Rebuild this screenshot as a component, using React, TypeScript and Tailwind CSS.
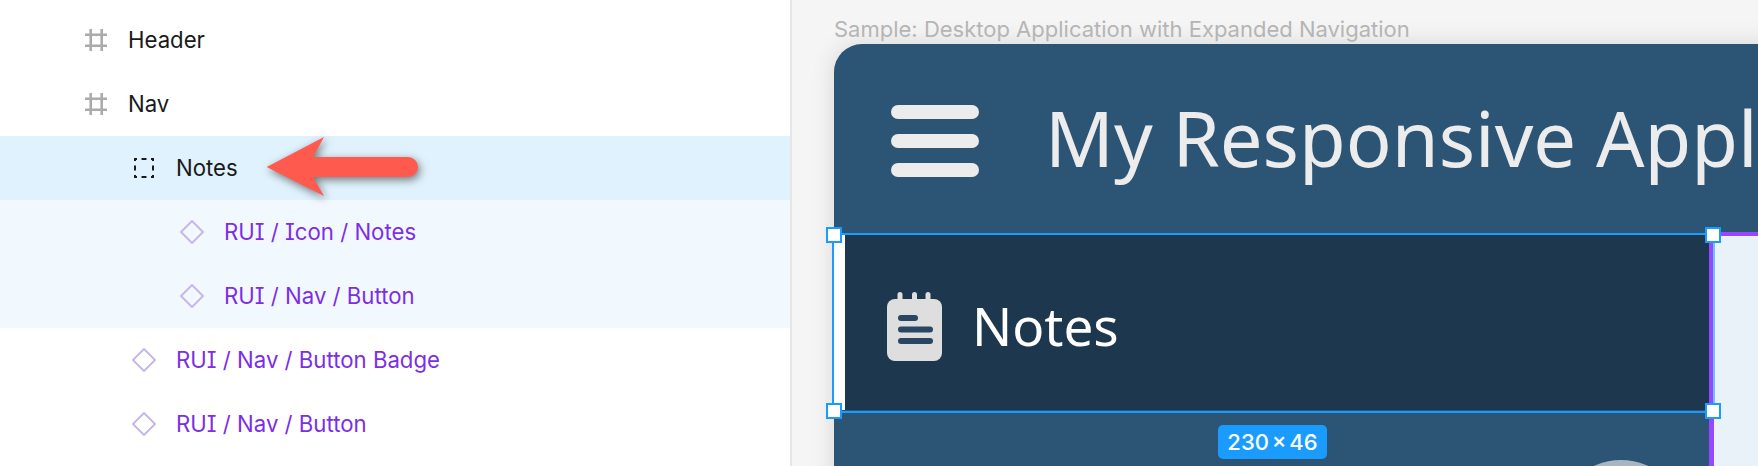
const rows = [
  { label: "Header", kind: "frame", indent: "pl-[84px]", bg: "bg-white" },
  { label: "Nav", kind: "frame", indent: "pl-[84px]", bg: "bg-white" },
  { label: "Notes", kind: "dashed", indent: "pl-[132px]", bg: "bg-[#e0f2fd]" },
  { label: "RUI / Icon / Notes", kind: "comp", indent: "pl-[180px]", bg: "bg-[#f2f9fe]" },
  { label: "RUI / Nav / Button", kind: "comp", indent: "pl-[180px]", bg: "bg-[#f2f9fe]" },
  { label: "RUI / Nav / Button Badge", kind: "comp", indent: "pl-[132px]", bg: "bg-white" },
  { label: "RUI / Nav / Button", kind: "comp", indent: "pl-[132px]", bg: "bg-white" },
];

const LayerIcon = ({ kind }: { kind: string }) => {
  if (kind === "frame") {
    return (
      <svg width="24" height="24" viewBox="0 0 24 24" fill="none" stroke="#ababab" strokeWidth="2.6">
        <path d="M6.7 1v22M17.7 1v22M1 6.7h22M1 17.7h22" />
      </svg>
    );
  }
  if (kind === "dashed") {
    return (
      <svg width="24" height="24" viewBox="0 0 24 24" fill="none" stroke="#1a1a1a" strokeWidth="2">
        <path d="M3 5V3h2M9.5 3h5M19 3h2v2M21 9.5v5M21 19v2h-2M14.5 21h-5M5 21H3v-2M3 14.5v-5" />
      </svg>
    );
  }
  return (
    <svg width="24" height="24" viewBox="0 0 24 24" fill="none" stroke="#c9b8e6" strokeWidth="2">
      <path d="M12 1l11 11-11 11L1 12z" />
    </svg>
  );
};

const Handle = ({ className }: { className: string }) => (
  <div className={`absolute w-4 h-4 bg-white border-2 border-[#1a9cff] ${className}`} />
);

export default function App() {
  return (
    <div className="relative flex w-[1758px] h-[466px] overflow-hidden font-['Inter',sans-serif]">
      {/* LAYERS */}
      <div className="w-[792px] shrink-0 bg-white border-r-2 border-[#e6e6e6] pt-2">
        {rows.map((row, i) => (
          <div key={i} className={`flex items-center gap-[20px] h-16 ${row.indent} ${row.bg}`}>
            <LayerIcon kind={row.kind} />
            <span
              className={`text-[22.2px] [font-feature-settings:'cv08'] ${
                row.kind === "comp" ? "text-[#7c2ee6]" : "text-[#1a1a1a]"
              }`}
            >
              {row.label}
            </span>
          </div>
        ))}
      </div>

      {/* ARROW */}
      <svg
        width="170"
        height="75"
        viewBox="0 0 170 75"
        className="absolute left-[260px] top-[130px] drop-shadow-[2px_3px_4px_rgba(0,0,0,0.5)]"
      >
        <path
          fill="#ff5a4d"
          d="M6.7 37L64 7 53 27h95a10 10 0 0 1 0 20H53l11 19z"
        />
      </svg>

      {/* CANVAS */}
      <div className="relative flex-1 min-w-0 bg-[#f5f5f5] pl-[42px] pt-[14px]">
        <p className="text-[22px] leading-[30px] text-[#b5b5b5]">
          Sample: Desktop Application with Expanded Navigation
        </p>
        <div className="w-[1000px] h-[500px] rounded-tl-[28px] bg-[#2c5475] shadow-[0_0_24px_rgba(0,0,0,0.12)] overflow-hidden">
          <div className="flex items-center h-[191px] pl-[57px] font-['Noto_Sans',sans-serif] text-[#ececec]">
            <div className="flex flex-col gap-[15px] w-[88px] shrink-0 mt-[2px]">
              <div className="h-[14px] rounded-full bg-[#ececec]" />
              <div className="h-[14px] rounded-full bg-[#ececec]" />
              <div className="h-[14px] rounded-full bg-[#ececec]" />
            </div>
            <span className="ml-[66px] mb-[3px] text-[76px] whitespace-nowrap">My Responsive Application</span>
          </div>
          <div className="flex">
            <div className="w-[875px] shrink-0">
              <div className="h-[175px] border-l-[11px] border-white bg-[#1d374e] flex items-center pl-[42px] pt-2 font-['Noto_Sans',sans-serif]">
                <svg width="55" height="69" viewBox="0 0 55 69" className="shrink-0">
                  <rect x="10.5" y="0" width="5" height="14" rx="2.5" fill="#dedede" />
                  <rect x="25" y="0" width="5" height="14" rx="2.5" fill="#dedede" />
                  <rect x="38.5" y="0" width="5" height="14" rx="2.5" fill="#dedede" />
                  <rect x="0" y="7" width="55" height="62" rx="8" fill="#dedede" />
                  <rect x="11" y="23" width="20" height="6" rx="3" fill="#294763" />
                  <rect x="11" y="34.5" width="35" height="6" rx="3" fill="#294763" />
                  <rect x="11" y="46" width="35" height="6" rx="3" fill="#294763" />
                </svg>
                <span className="ml-[30px] mb-[2px] text-[53px] text-white">Notes</span>
              </div>
              <div className="mt-[50px] ml-[722px] w-[130px] h-[130px] rounded-full bg-[#a9b5c0]" />
            </div>
            <div className="w-[125px] h-[300px] -mt-[3px] bg-[#e9f1f9] border-l-[5px] border-t-[4px] border-[#9747ff]" />
          </div>
        </div>

        {/* SELECTION */}
        <div className="absolute left-[40px] top-[233px] w-[883px] h-[180px] border-2 border-[#1a9cff] border-r-[#6cc4ff]">
          <Handle className="left-[-8px] top-[-8px]" />
          <Handle className="right-[-8px] top-[-8px]" />
          <Handle className="left-[-8px] bottom-[-8px]" />
          <Handle className="right-[-8px] bottom-[-8px]" />
        </div>
        <div className="absolute left-[426px] top-[425px] w-[109px] h-[34px] rounded-[5px] bg-[#1a9cff] text-white text-[22px] font-medium [word-spacing:-3px] flex items-center justify-center">
          230 × 46
        </div>
      </div>
    </div>
  );
}
